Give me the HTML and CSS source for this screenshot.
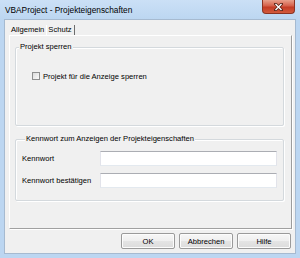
FILE: index.html
```html
<!DOCTYPE html>
<html lang="de">
<head>
    <meta charset="UTF-8">
    <title>VBAProject - Projekteigenschaften</title>
    <link rel="stylesheet" href="styles.css">
</head>
<body>
    <div class="window">
        <div class="titlebar">
            <span class="title">VBAProject - Projekteigenschaften</span>
            <span class="close">
                <svg width="9" height="8" viewBox="0 0 9 8">
                    <path d="M1.5 1 L7.5 7 M7.5 1 L1.5 7" stroke="#5a2418" stroke-width="3" stroke-linecap="square"/>
                    <path d="M1.5 1 L7.5 7 M7.5 1 L1.5 7" stroke="#fff" stroke-width="1.4"/>
                </svg>
            </span>
        </div>

        <div class="client">
            <div class="tabs">
                <span class="tab">Allgemein</span>
                <span class="tab active">Schutz</span>
            </div>

            <div class="panel">
                <div class="group lock">
                    <span class="group-title">Projekt sperren</span>
                    <label class="check"><span class="box"></span>Projekt für die Anzeige sperren</label>
                </div>

                <div class="group password">
                    <span class="group-title">Kennwort zum Anzeigen der Projekteigenschaften</span>
                    <div class="field">
                        <span class="field-label">Kennwort</span>
                        <span class="input"></span>
                    </div>
                    <div class="field">
                        <span class="field-label">Kennwort bestätigen</span>
                        <span class="input"></span>
                    </div>
                </div>
            </div>

            <div class="buttons">
                <button class="btn">OK</button>
                <button class="btn">Abbrechen</button>
                <button class="btn">Hilfe</button>
            </div>
        </div>
    </div>
</body>
</html>
```

FILE: styles.css
```css
* {
    margin: 0;
    padding: 0;
    box-sizing: border-box;
}

body {
    width: 300px;
    height: 258px;
    overflow: hidden;
    background: #bcd6f1;
    font-family: 'Liberation Sans', Arial, sans-serif;
    font-size: 7.6px;
    color: #111;
}

.window {
    width: 300px;
    height: 258px;
}

/* title bar */
.titlebar {
    height: 19px;
    display: flex;
    align-items: flex-start;
    padding-left: 5px;
    background: linear-gradient(#cbe0f6, #bcd6f1);
}

.title {
    font-size: 8.3px;
    line-height: 20px;
    color: #000;
}

.close {
    margin-left: auto;
    margin-right: 5px;
    width: 33px;
    height: 14px;
    display: flex;
    align-items: center;
    justify-content: center;
    border: 1px solid #8a3323;
    border-top: none;
    border-radius: 0 0 4px 4px;
    background: linear-gradient(#e8a08c 0%, #d5604a 45%, #c43b25 55%, #d25a3c 100%);
}

/* client area */
.client {
    height: 235px;
    margin: 0 4px;
    padding: 0 3px 0 4px;
    border: 1px solid #a6bad0;
    background: #f0f0f0;
}

.tabs {
    height: 15px;
    display: flex;
    align-items: flex-end;
}

.tab {
    height: 10px;
    line-height: 10px;
    padding: 0 2px;
    color: #000;
}

.tab.active {
    border-right: 1px solid #6d6d6d;
    border-left: 1px solid #fff;
    padding-left: 1px;
}

.panel {
    height: 194px;
    padding: 11px 7px 0 5px;
    border-top: 1px solid #fff;
    border-left: 1px solid #fff;
    border-right: 1px solid #9c9c9c;
    border-bottom: 1px solid #a0a0a0;
    box-shadow: 1px 1px 0 #fff;
}

/* group boxes */
.group {
    border: 1px solid #d4d9dd;
    border-radius: 2px;
    box-shadow: 1px 1px 0 #fff, inset 1px 1px 0 #fff;
}

.group-title {
    display: table;
    margin: -6px 0 0 3px;
    padding: 0 1px;
    line-height: 9px;
    background: #f0f0f0;
    color: #000;
}

.lock {
    height: 79px;
}

.check {
    display: flex;
    align-items: center;
    gap: 3px;
    height: 10px;
    margin-top: 20px;
    padding-left: 16px;
    color: #000;
}

.box {
    width: 8px;
    height: 8px;
    border: 1px solid #8e8f8f;
    background: linear-gradient(135deg, #dcdcdc, #fafafa);
}

.password {
    height: 62px;
    margin-top: 13px;
    padding: 0 6px;
}

.field {
    display: flex;
    align-items: center;
    height: 15px;
    margin-top: 7px;
}

.field:first-of-type {
    margin-top: 8px;
}

.field-label {
    width: 78px;
    color: #000;
}

.input {
    flex: 1;
    height: 15px;
    background: #fff;
    border: 1px solid #e2e3ea;
    border-top-color: #abadb3;
    border-bottom-color: #e3e9ef;
}

/* dialog buttons */
.buttons {
    display: flex;
    justify-content: flex-end;
    gap: 4px;
    margin-top: 4px;
    padding-right: 1px;
}

.btn {
    width: 54px;
    height: 16px;
    font-family: inherit;
    font-size: 7.6px;
    color: #000;
    border: 1px solid #9a9a9a;
    border-radius: 2px;
    background: linear-gradient(#f7f7f7 0%, #efefef 48%, #e4e4e4 52%, #dcdcdc 100%);
    box-shadow: inset 0 0 0 1px #fcfcfc;
}
```
